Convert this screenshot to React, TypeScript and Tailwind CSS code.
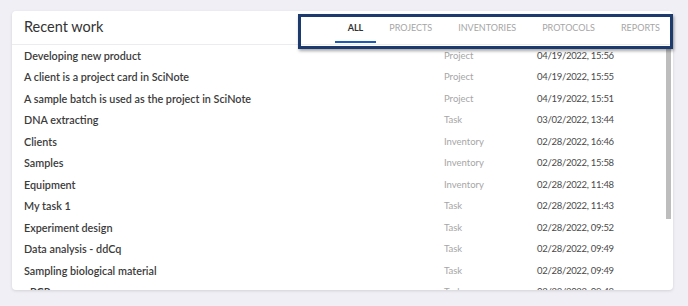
const TABS = ["ALL", "PROJECTS", "INVENTORIES", "PROTOCOLS", "REPORTS"];

const ROWS = [
  ["Developing new product", "Project", "04/19/2022, 15:56"],
  ["A client is a project card in SciNote", "Project", "04/19/2022, 15:55"],
  ["A sample batch is used as the project in SciNote", "Project", "04/19/2022, 15:51"],
  ["DNA extracting", "Task", "03/02/2022, 13:44"],
  ["Clients", "Inventory", "02/28/2022, 16:46"],
  ["Samples", "Inventory", "02/28/2022, 15:58"],
  ["Equipment", "Inventory", "02/28/2022, 11:48"],
  ["My task 1", "Task", "02/28/2022, 11:43"],
  ["Experiment design", "Task", "02/28/2022, 09:52"],
  ["Data analysis - ddCq", "Task", "02/28/2022, 09:49"],
  ["Sampling biological material", "Task", "02/28/2022, 09:49"],
  ["qPCR", "Task", "02/28/2022, 09:48"],
];

export default function App() {
  return (
    <div className="relative w-[688px] h-[306px] bg-[#efeff5] pt-[11px] pl-[12px] font-['Lato','Liberation_Sans',sans-serif]">
      <div className="relative w-[661px] h-[279px] bg-white rounded-[4px] shadow-[0_1px_3px_rgba(0,0,0,0.12)] overflow-hidden flex flex-col">
        <div className="h-[34px] shrink-0 flex items-stretch justify-between border-b border-[#ececf0]">
          <div className="pl-3 flex items-center text-[14.5px] text-[#333] leading-none pb-[1px]">Recent work</div>
          <div className="flex items-stretch">
            {TABS.map((t, i) => (
              <div key={t} className={`relative px-[13px] flex items-center text-[9px] leading-none pb-[1px] ${i === 0 ? "text-[#333] font-bold" : "text-[#a6a6a6]"}`}>
                {t}
                {i === 0 && <div className="absolute left-0 right-0 bottom-[1px] h-[2.5px] bg-[#1d5cb6]" />}
              </div>
            ))}
          </div>
        </div>
        <div className="relative flex-1 overflow-hidden">
          {ROWS.map(([name, type, date]) => (
            <div key={name} className="h-[21.5px] flex items-center text-[9.5px]">
              <div className="w-[432px] pl-3 text-[#3b3b3b] font-semibold text-[10.8px] whitespace-nowrap">{name}</div>
              <div className="w-[93px] text-[#a6a6a6]">{type}</div>
              <div className="text-[#4a4a4a] tracking-[-0.03em]">{date}</div>
            </div>
          ))}
          <div className="absolute right-[2px] top-[1px] w-[5px] h-[173px] bg-[#bdbdbd]" />
        </div>
      </div>
      <div className="absolute left-[298px] top-[14px] w-[375px] h-[35px] border-[3px] border-[#1c3a6e] shadow-[1px_2px_3px_rgba(0,0,0,0.35)]" />
    </div>
  );
}
